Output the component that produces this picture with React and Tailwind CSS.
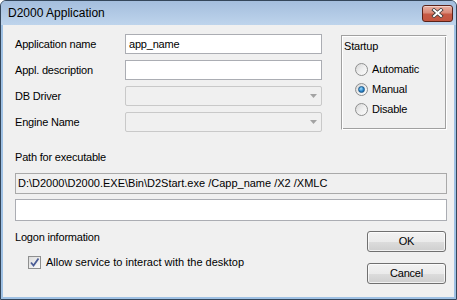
import React from "react";

function Radio({ checked }) {
  return (
    <span className="w-[13px] h-[13px] rounded-full border border-[#8e8f8f] bg-gradient-to-br from-[#d6d6d6] via-[#eeeeee] to-[#fbfbfb] flex items-center justify-center shrink-0">
      {checked && (
        <span className="w-[7px] h-[7px] rounded-full border border-[#1f5a8a] bg-[radial-gradient(circle_at_40%_35%,#9fdcfc,#2a86cc_55%,#0d4f8a)]" />
      )}
    </span>
  );
}

function Combo() {
  return (
    <div className="w-[197px] h-[20px] border border-[#c9c9c9] rounded-[2px] bg-[#f0f0f0] flex items-center justify-end pr-[4px]">
      <svg width="7" height="4" viewBox="0 0 7 4">
        <path d="M0 0 L7 0 L3.5 4 Z" fill="#a3a3a3" />
      </svg>
    </div>
  );
}

function Btn({ children }) {
  return (
    <div className="w-[79px] h-[21px] rounded-[3px] border border-[#707070] bg-[linear-gradient(to_bottom,#f2f2f2_0%,#ebebeb_50%,#dddddd_50%,#cfcfcf_100%)] shadow-[inset_0_0_0_1px_rgba(255,255,255,0.7)] flex items-center justify-center text-black">
      {children}
    </div>
  );
}

export default function App() {
  return (
    <div className="w-[457px] h-[300px] bg-white font-['Liberation_Sans',Arial,sans-serif] text-[11px] tracking-[-0.2px] text-black leading-[13px]">
      <div className="w-[457px] h-[300px] border border-[#34465a] rounded-t-[6px] overflow-hidden flex flex-col bg-[#9fc1e4]">
        <div className="h-[24px] shrink-0 flex items-center justify-between pl-[7px] pr-[3px] bg-gradient-to-b from-[#a4bedd] to-[#bed4ec]">
          <span className="text-[12px] tracking-normal text-black">D2000 Application</span>
          <div className="w-[31px] h-[17px] rounded-[3px] border border-[#5a2219] bg-[linear-gradient(to_bottom,#e9b0a2_0%,#d98a78_45%,#c65a45_55%,#c4553f_100%)] shadow-[inset_0_1px_0_rgba(255,255,255,0.45)] flex items-center justify-center">
            <svg width="13" height="10" viewBox="0 0 13 10">
              <path d="M3 2 L10 8 M10 2 L3 8" stroke="#3a3a3a" strokeWidth="3.6" strokeLinecap="square" fill="none" />
              <path d="M3 2 L10 8 M10 2 L3 8" stroke="#ffffff" strokeWidth="2" strokeLinecap="square" fill="none" />
            </svg>
          </div>
        </div>
        <div className="flex-1 mx-[2px] mb-[2px] bg-[#f0f0f0] pl-[12px] pr-[7px] pt-[6px] flex flex-col">
          <div className="flex items-start">
            <div className="flex flex-col w-[307px]">
              <div className="h-[26px] flex items-center">
                <span className="w-[110px]">Application name</span>
                <div className="w-[197px] h-[20px] border border-[#abadb3] bg-white flex items-center pl-[3px]">app_name</div>
              </div>
              <div className="h-[26px] flex items-center">
                <span className="w-[110px]">Appl. description</span>
                <div className="w-[197px] h-[20px] border border-[#abadb3] bg-white" />
              </div>
              <div className="h-[26px] flex items-center">
                <span className="w-[110px]">DB Driver</span>
                <Combo />
              </div>
              <div className="h-[26px] flex items-center">
                <span className="w-[110px]">Engine Name</span>
                <Combo />
              </div>
            </div>
            <div className="ml-[19px] mt-[4px] w-[107px] h-[95px] border border-t-[#a0a0a0] border-l-[#a0a0a0] border-r-[#ffffff] border-b-[#ffffff] shadow-[inset_1px_1px_0_#ffffff,inset_-1px_-1px_0_#a0a0a0] pl-[2px] pt-[4px] flex flex-col">
              <span>Startup</span>
              <div className="mt-[6px] flex flex-col ml-[11px]">
                <div className="h-[20px] flex items-center gap-[4px]"><Radio /><span>Automatic</span></div>
                <div className="h-[20px] flex items-center gap-[4px]"><Radio checked /><span>Manual</span></div>
                <div className="h-[20px] flex items-center gap-[4px]"><Radio /><span>Disable</span></div>
              </div>
            </div>
          </div>
          <span className="mt-[16px]">Path for executable</span>
          <div className="mt-[9px] h-[21px] border border-[#a9a9a9] bg-[#f0f0f0] flex items-center pl-[2px] tracking-normal">
            {"D:\\D2000\\D2000.EXE\\Bin\\D2Start.exe /Capp_name /X2 /XMLC"}
          </div>
          <div className="mt-[5px] h-[22px] border border-[#abadb3] bg-white" />
          <div className="mt-[10px] flex justify-between">
            <div className="flex flex-col">
              <span>Logon information</span>
              <div className="mt-[12px] ml-[13px] h-[13px] flex items-center gap-[5px]">
                <span className="w-[13px] h-[13px] border border-[#8e8f8f] bg-gradient-to-br from-[#dcdcdc] to-[#fbfbfb] flex items-center justify-center shrink-0">
                  <svg width="11" height="11" viewBox="0 0 11 11">
                    <path d="M2 5.5 L4.5 8.5 L9.5 1.5" stroke="#4b5d96" strokeWidth="1.8" fill="none" />
                  </svg>
                </span>
                <span className="tracking-normal">Allow service to interact with the desktop</span>
              </div>
            </div>
            <div className="flex flex-col gap-[11px] mr-[1px]">
              <Btn>OK</Btn>
              <Btn>Cancel</Btn>
            </div>
          </div>
        </div>
      </div>
    </div>
  );
}
